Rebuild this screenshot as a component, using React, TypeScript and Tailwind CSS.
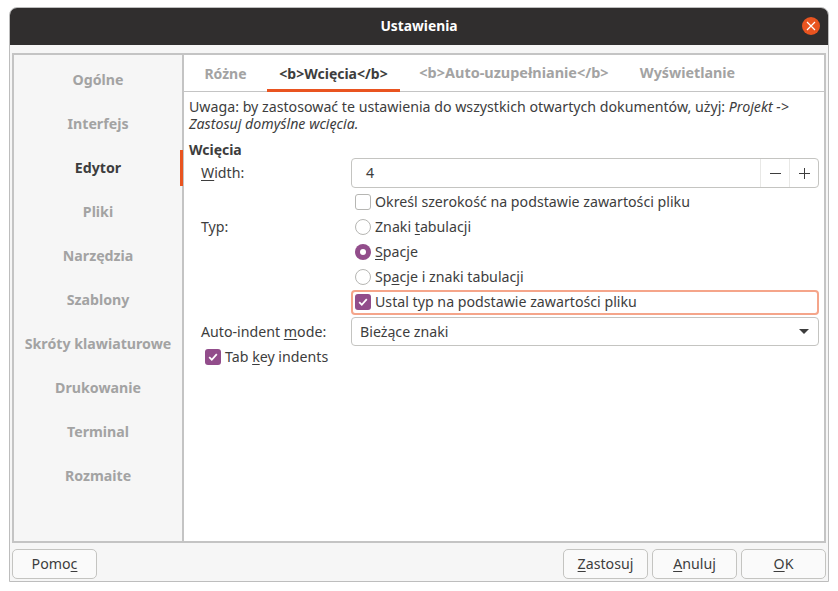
const sideItems = ["Ogólne", "Interfejs", "Edytor", "Pliki", "Narzędzia", "Szablony", "Skróty klawiaturowe", "Drukowanie", "Terminal", "Rozmaite"];

const tabs = [
  { label: "Różne", className: "w-[83px] text-[14px]" },
  { label: "<b>Wcięcia</b>", className: "w-[133px] text-[14px]", active: true },
  { label: "<b>Auto-uzupełnianie</b>", className: "w-[228px] text-[14.45px]" },
  { label: "Wyświetlanie", className: "w-[119px] text-[14.3px]" },
];

const U = ({ children }: { children: React.ReactNode }) => (
  <span className="underline underline-offset-2 decoration-1">{children}</span>
);

const Check = ({ on }: { on?: boolean }) => (
  <span
    className={
      on
        ? "w-4 h-4 rounded-[3px] bg-[#924d8b] flex items-center justify-center shrink-0"
        : "w-4 h-4 rounded-[3px] border border-[#b6b6b3] bg-white shrink-0"
    }
  >
    {on && (
      <svg width="12" height="12" viewBox="0 0 12 12" fill="none">
        <path d="M2.2 6.2 L4.8 8.8 L9.8 3.2" stroke="#fff" strokeWidth="1.8" />
      </svg>
    )}
  </span>
);

const Radio = ({ on }: { on?: boolean }) => (
  <span
    className={
      on
        ? "w-4 h-4 rounded-full bg-[#924d8b] flex items-center justify-center shrink-0"
        : "w-4 h-4 rounded-full border border-[#b6b6b3] bg-white shrink-0"
    }
  >
    {on && <span className="w-[6px] h-[6px] rounded-full bg-white" />}
  </span>
);

const Button = ({ className, children }: { className: string; children: React.ReactNode }) => (
  <div
    className={`h-[30px] rounded-[5px] border border-[#c4c4c1] bg-[#fafafa] flex items-center justify-center ${className}`}
  >
    {children}
  </div>
);

export default function App() {
  return (
    <div className="w-[838px] h-[591px] bg-white pt-[7px] pl-[9px] text-[14.2px] text-[#3d3d3d] font-['Noto_Sans',sans-serif] overflow-hidden">
      <div className="w-[820px] h-[575px] border border-[#bdbdbd] rounded-t-[8px] bg-[#f6f6f6] flex flex-col">
        <div className="h-[37px] bg-[#302e2e] rounded-t-[7px] flex items-center justify-center relative shrink-0">
          <span className="font-bold text-white text-[13.8px]">Ustawienia</span>
          <span className="absolute right-[8px] top-[9px] w-[18px] h-[18px] rounded-full bg-[#e95420] flex items-center justify-center">
            <svg width="10" height="10" viewBox="0 0 10 10" fill="none">
              <path d="M1 1 L9 9 M9 1 L1 9" stroke="#fff" strokeWidth="1.2" />
            </svg>
          </span>
        </div>

        <div className="mx-[2px] mt-[8px] h-[490px] border-2 border-[#c4c4c4] flex shrink-0">
          <div className="w-[168px] py-[3px] shrink-0">
            {sideItems.map((s) => (
              <div
                key={s}
                className={`h-[44px] flex items-center justify-center font-bold text-[14.2px] ${s === "Edytor" ? "text-[#3d3d3d]" : "text-[#a3a3a3]"}`}
              >
                {s}
              </div>
            ))}
          </div>
          <div className="flex-1 flex min-w-0 relative">
            <span className="absolute -left-[2px] top-[95px] w-[3px] h-[36px] bg-[#e95420]" />
            <div className="flex-1 bg-white border-l-2 border-[#c4c4c4] flex flex-col min-w-0">
              <div className="h-[37px] border-b border-[#c4c4c4] flex shrink-0">
                {tabs.map((t) => (
                  <div
                    key={t.label}
                    className={`${t.className} flex items-center justify-center font-bold ${t.active ? "text-[#3d3d3d] border-b-[3px] border-[#e95420] h-[37px] pt-[3px]" : "text-[#a3a3a3]"}`}
                  >
                    {t.label}
                  </div>
                ))}
              </div>
              <div className="px-[5px] pt-[6px] flex flex-col">
                <p className="leading-[17px]">
                  Uwaga: by zastosować te ustawienia do wszystkich otwartych dokumentów, użyj: <i>Projekt -&gt; Zastosuj domyślne wcięcia.</i>
                </p>
                <div className="font-bold text-[14px] leading-[18px] mt-[9px]">Wcięcia</div>
                <div className="grid grid-cols-[162px_468px] mt-[-1px]">
                  <div className="pl-[12px] h-[30px] flex items-center">
                    <span className="leading-none"><U>W</U>idth:</span>
                  </div>
                  <div className="h-[30px] border border-[#c4c4c1] rounded-[4px] flex items-center">
                    <span className="flex-1 pl-[14px]">4</span>
                    <span className="w-[29px] h-full border-l border-[#e8e8e6] flex items-center justify-center">
                      <svg width="11" height="11" viewBox="0 0 11 11"><path d="M0 5.5 H11" stroke="#3d3d3d" /></svg>
                    </span>
                    <span className="w-[29px] h-full border-l border-[#e8e8e6] flex items-center justify-center">
                      <svg width="11" height="11" viewBox="0 0 11 11"><path d="M0 5.5 H11 M5.5 0 V11" stroke="#3d3d3d" /></svg>
                    </span>
                  </div>

                  <div />
                  <div className="h-[27px] pt-[1px] flex items-center gap-[4px] pl-[4px]">
                    <Check />
                    <span>Określ szerokość na podstawie zawartości pliku</span>
                  </div>

                  <div className="pl-[12px] h-[24px] flex items-center">Typ:</div>
                  <div className="h-[24px] flex items-center gap-[4px] pl-[4px]">
                    <Radio />
                    <span>Znaki <U>t</U>abulacji</span>
                  </div>

                  <div />
                  <div className="h-[26px] flex items-center gap-[4px] pl-[4px]">
                    <Radio on />
                    <span><U>S</U>pacje</span>
                  </div>

                  <div />
                  <div className="h-[24px] flex items-center gap-[4px] pl-[4px]">
                    <Radio />
                    <span>Sp<U>a</U>cje i znaki tabulacji</span>
                  </div>

                  <div />
                  <div className="h-[25px] mt-[1px] pb-[1px] border-2 border-[#f5a58a] rounded-[4px] flex items-center gap-[4px] pl-[2px]">
                    <Check on />
                    <span>Ustal typ na podstawie zawartości pliku</span>
                  </div>

                  <div className="pl-[12px] h-[29px] mt-[2px] flex items-center">
                    <span>Auto-indent <U>m</U>ode:</span>
                  </div>
                  <div className="h-[29px] mt-[2px] border border-[#c4c4c1] rounded-[4px] flex items-center justify-between pl-[8px] pr-[9px]">
                    <span>Bieżące znaki</span>
                    <span className="w-0 h-0 border-l-[5px] border-r-[5px] border-t-[5px] border-l-transparent border-r-transparent border-t-[#3d3d3d]" />
                  </div>
                </div>
                <div className="h-[22px] pl-[16px] flex items-center gap-[4px]">
                  <Check on />
                  <span>Tab <U>k</U>ey indents</span>
                </div>
              </div>
            </div>
          </div>
        </div>

        <div className="flex items-center justify-between px-[2px] mt-[6px]">
          <Button className="w-[85px]">Pomo<U>c</U></Button>
          <div className="flex gap-[4px]">
            <Button className="w-[85px]"><U>Z</U>astosuj</Button>
            <Button className="w-[85px]"><U>A</U>nuluj</Button>
            <Button className="w-[85px]"><U>O</U>K</Button>
          </div>
        </div>
      </div>
    </div>
  );
}
